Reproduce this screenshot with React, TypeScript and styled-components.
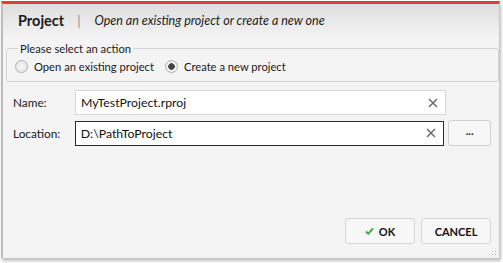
import React from "react";
import styled, { createGlobalStyle } from "styled-components";

const Global = createGlobalStyle`
  html, body { margin: 0; padding: 0; background: #ffffff; }
  body { font-family: Lato, "Open Sans", sans-serif; }
`;

const Frame = styled.div`
  width: 503px;
  height: 263px;
  box-sizing: border-box;
  padding: 1px 3px 5px 1px;
  background: #ffffff;
`;

const Window = styled.div`
  height: 100%;
  box-sizing: border-box;
  border-top: 3px solid #d8403c;
  border-left: 2px solid #bdbdbd;
  border-right: 1px solid #c8c8c8;
  box-shadow: 1px 3px 3px rgba(0, 0, 0, 0.25);
  background: #f4f4f4;
  display: flex;
  flex-direction: column;
  position: relative;
`;

const Header = styled.div`
  height: 33px;
  display: flex;
  align-items: center;
  padding: 0 0 0 15px;
  background: linear-gradient(#dedede, #f3f3f3);
  box-sizing: border-box;
`;

const Title = styled.span`
  font-size: 14.5px;
  font-weight: 700;
  color: #1a1a1a;
`;

const Sep = styled.span`
  margin: 0 14px 0 13px;
  color: #8a8a8a;
  font-size: 13px;
`;

const Subtitle = styled.span`
  font-size: 12.5px;
  font-style: italic;
  color: #222;
`;

const Body = styled.div`
  flex: 1;
  display: flex;
  flex-direction: column;
  padding: 5px 0 0 3px;
`;

const Group = styled.fieldset`
  margin: 0;
  padding: 5px 8px 8px 8px;
  border: 1px solid #d4d4d4;
  border-radius: 3px;
  display: flex;
  gap: 11px;
  align-items: center;
`;

const Legend = styled.legend`
  padding: 0 2px;
  margin-left: 3px;
  font-size: 11.2px;
  color: #1a1a1a;
`;

const RadioLabel = styled.label`
  display: flex;
  align-items: center;
  gap: 6px;
  font-size: 11.2px;
  color: #1a1a1a;
`;

const RadioDot = styled.span<{ $on?: boolean }>`
  width: 11px;
  height: 11px;
  border-radius: 50%;
  border: 1px solid #b0b0b0;
  background: radial-gradient(circle, ${(p) => (p.$on ? "#444 0 3px, " : "")}#f5f5f5 ${(p) => (p.$on ? "3.5px" : "0")}, #e3e3e3 100%);
  display: inline-block;
`;

const Rows = styled.div`
  display: flex;
  flex-direction: column;
  gap: 5px;
  padding: 8px 8px 0 7px;
`;

const Row = styled.div`
  display: flex;
  align-items: center;
`;

const FieldLabel = styled.span`
  width: 62px;
  font-size: 11.8px;
  color: #1a1a1a;
`;

const Input = styled.div<{ $focus?: boolean }>`
  width: 371px;
  height: 25px;
  box-sizing: border-box;
  border: 1px solid ${(p) => (p.$focus ? "#2a2a2a" : "#d6d6d6")};
  background: #ffffff;
  display: flex;
  align-items: center;
  padding: 0 7px 0 5px;
  font-size: 12.3px;
  color: #111;
`;

const InputText = styled.span`
  flex: 1;
`;

const Browse = styled.button`
  margin-left: 4px;
  width: 43px;
  height: 26px;
  border: 1px solid #d2d2d2;
  border-radius: 3px;
  background: #f7f7f7;
  font-family: inherit;
  font-size: 11px;
  font-weight: 700;
  color: #222;
  padding: 0 0 6px;
`;

const Footer = styled.div`
  margin-top: auto;
  display: flex;
  justify-content: flex-end;
  gap: 6px;
  padding: 0 8px 14px 0;
`;

const Button = styled.button<{ $w: number }>`
  width: ${(p) => p.$w}px;
  height: 26px;
  border: 1px solid #d6d6d6;
  border-radius: 3px;
  background: #f7f7f7;
  font-family: inherit;
  font-size: 11px;
  font-weight: 700;
  color: #111;
  display: flex;
  align-items: center;
  justify-content: center;
  gap: 5px;
`;

const Grip = styled.div`
  position: absolute;
  right: 2px;
  bottom: 2px;
  width: 9px;
  height: 9px;
  background-image: radial-gradient(circle, #b5b5b5 0.8px, transparent 1px);
  background-size: 3px 3px;
  clip-path: polygon(100% 0, 100% 100%, 0 100%);
`;

const ClearIcon = () => (
  <svg width="10" height="10" viewBox="0 0 10 10">
    <path d="M1 1 L9 9 M9 1 L1 9" stroke="#6b6b6b" strokeWidth="1.5" />
  </svg>
);

const CheckIcon = () => (
  <svg width="9" height="8" viewBox="0 0 9 8">
    <path d="M1 4.5 L3.3 6.8 L8 1.3" stroke="#3fae3f" strokeWidth="2" fill="none" />
  </svg>
);

export default function App() {
  return (
    <>
      <Global />
      <Frame>
        <Window>
          <Header>
            <Title>Project</Title>
            <Sep>|</Sep>
            <Subtitle>Open an existing project or create a new one</Subtitle>
          </Header>
          <Body>
            <Group>
              <Legend>Please select an action</Legend>
              <RadioLabel>
                <RadioDot />
                Open an existing project
              </RadioLabel>
              <RadioLabel>
                <RadioDot $on />
                Create a new project
              </RadioLabel>
            </Group>
            <Rows>
              <Row>
                <FieldLabel>Name:</FieldLabel>
                <Input>
                  <InputText>MyTestProject.rproj</InputText>
                  <ClearIcon />
                </Input>
              </Row>
              <Row>
                <FieldLabel>Location:</FieldLabel>
                <Input $focus>
                  <InputText>D:\PathToProject</InputText>
                  <ClearIcon />
                </Input>
                <Browse>...</Browse>
              </Row>
            </Rows>
            <Footer>
              <Button $w={70}>
                <CheckIcon />
                OK
              </Button>
              <Button $w={70}>CANCEL</Button>
            </Footer>
          </Body>
          <Grip />
        </Window>
      </Frame>
    </>
  );
}
